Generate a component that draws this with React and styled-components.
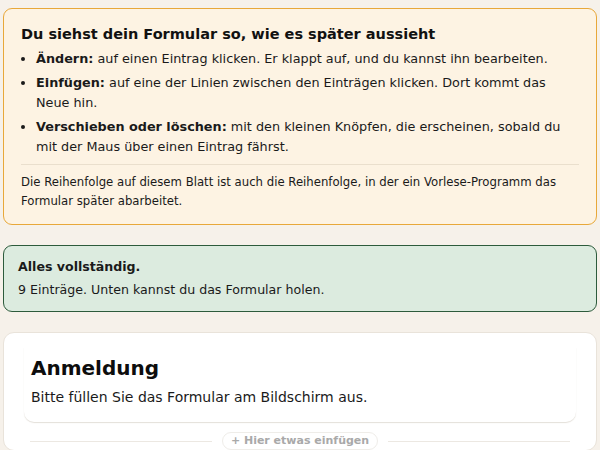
import React from "react";
import styled, { createGlobalStyle } from "styled-components";

const Global = createGlobalStyle`
  html, body { margin: 0; padding: 0; background: #f6f1ea; }
  body { font-family: "DejaVu Sans", Verdana, sans-serif; color: #1a1a1a; }
  * { box-sizing: border-box; }
`;

const Page = styled.div`
  padding: 8px 3px;
  display: flex;
  flex-direction: column;
  gap: 20px;
`;

const Notice = styled.section`
  border: 1px solid ${(p) => p.$border};
  background: ${(p) => p.$bg};
  border-radius: 9px;
  padding: ${(p) => p.$pad};
`;

const NoticeTitle = styled.h2`
  margin: 0 0 4px;
  font-size: 14.5px;
  line-height: 22px;
  font-weight: 700;
  color: #111;
`;

const List = styled.ul`
  margin: 0;
  padding: 0 0 0 15px;
  font-size: 12.8px;
  line-height: 20px;
`;

const Item = styled.li`
  margin: 0 0 4px;
  &:last-child { margin-bottom: 0; }
`;

const Divider = styled.hr`
  border: 0;
  border-top: 1px solid #eadfcd;
  margin: 7px 0 8px;
`;

const Footnote = styled.p`
  margin: 0;
  font-size: 11.7px;
  line-height: 19px;
`;

const StatusTitle = styled.div`
  font-weight: 700;
  font-size: 12.6px;
  line-height: 22px;
`;

const StatusText = styled.div`
  font-size: 12.6px;
  line-height: 22px;
  margin-top: 1px;
`;

const Card = styled.section`
  background: #fff;
  border: 1px solid #e9e3da;
  border-radius: 11px;
  padding: 14px 20px 0;
`;

const Header = styled.div`
  padding: 7px 7px 14px;
  border-radius: 0 0 10px 10px;
  box-shadow: 0 1px 1px rgba(120, 100, 70, 0.2);
`;

const FormTitle = styled.h1`
  margin: 0 0 4px;
  font-size: 20px;
  line-height: 28px;
  font-weight: 700;
  color: #0d0d0d;
`;

const FormDesc = styled.p`
  margin: 0;
  font-size: 14px;
  line-height: 22px;
`;

const InsertRow = styled.div`
  display: flex;
  align-items: center;
  gap: 10px;
  padding: 10px 6px 0;
`;

const Line = styled.div`
  flex: 1;
  height: 1px;
  background: #ece8e2;
`;

const InsertButton = styled.button`
  font-family: "DejaVu Sans", Verdana, sans-serif;
  font-weight: 700;
  font-size: 11px;
  color: #a9a9a9;
  background: #fff;
  border: 1px solid #efede9;
  border-radius: 999px;
  padding: 1px 8px;
  line-height: 14px;
`;

export default function App() {
  return (
    <>
      <Global />
      <Page>
        <Notice $border="#e8a83a" $bg="#fdf3e3" $pad="14px 17px 13px">
          <NoticeTitle>Du siehst dein Formular so, wie es später aussieht</NoticeTitle>
          <List>
            <Item>
              <b>Ändern:</b> auf einen Eintrag klicken. Er klappt auf, und du kannst ihn bearbeiten.
            </Item>
            <Item>
              <b>Einfügen:</b> auf eine der Linien zwischen den Einträgen klicken. Dort kommt das Neue hin.
            </Item>
            <Item>
              <b>Verschieben oder löschen:</b> mit den kleinen Knöpfen, die erscheinen, sobald du mit der Maus über einen Eintrag fährst.
            </Item>
          </List>
          <Divider />
          <Footnote>
            Die Reihenfolge auf diesem Blatt ist auch die Reihenfolge, in der ein Vorlese-Programm das Formular später abarbeitet.
          </Footnote>
        </Notice>
        <Notice $border="#2d5b3c" $bg="#dcebdf" $pad="10px 14px 10px">
          <StatusTitle>Alles vollständig.</StatusTitle>
          <StatusText>9 Einträge. Unten kannst du das Formular holen.</StatusText>
        </Notice>
        <Card>
          <Header>
            <FormTitle>Anmeldung</FormTitle>
            <FormDesc>Bitte füllen Sie das Formular am Bildschirm aus.</FormDesc>
          </Header>
          <InsertRow>
            <Line />
            <InsertButton>+ Hier etwas einfügen</InsertButton>
            <Line />
          </InsertRow>
        </Card>
      </Page>
    </>
  );
}
